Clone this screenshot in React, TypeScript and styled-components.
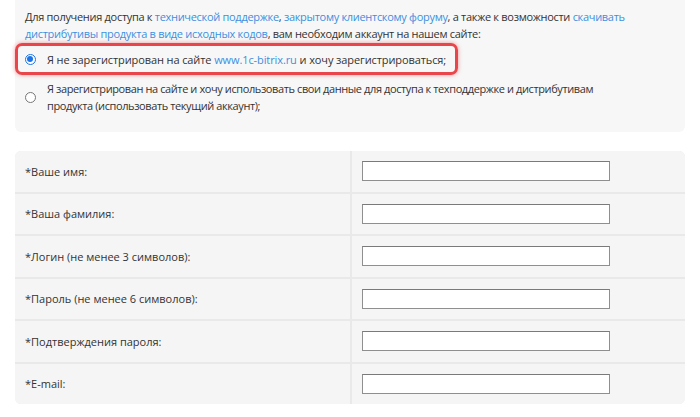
import React from 'react';
import styled, { createGlobalStyle } from 'styled-components';

const GlobalStyle = createGlobalStyle`
  html, body {
    margin: 0;
    padding: 0;
    background: #ffffff;
  }
  body {
    font-family: "Open Sans", "Noto Sans", Arial, sans-serif;
    color: #333333;
  }
`;

const Page = styled.div`
  padding: 0 15px;
  width: 670px;
`;

const InfoPanel = styled.div`
  background: #f7f7f7;
  border-radius: 0 0 6px 6px;
  padding: 8px 0 18px;
`;

const Intro = styled.p`
  margin: 0 0 1px;
  padding: 0 25px 0 10px;
  font-size: 11px;
  letter-spacing: -0.3px;
  line-height: 17px;
`;

const Link = styled.a`
  color: #3d8fe0;
  text-decoration: none;
`;

const Option = styled.label<{ $highlight?: boolean }>`
  display: flex;
  align-items: center;
  gap: 12px;
  box-sizing: border-box;
  font-size: 11px;
  line-height: 17px;
  ${({ $highlight }) =>
    $highlight
      ? `
    width: 443px;
    height: 32px;
    padding: 0 7px 0 7px;
    letter-spacing: -0.1px;
    white-space: nowrap;
    border: 3px solid #e8464b;
    border-radius: 7px;
    box-shadow: 0 0 4px rgba(232, 70, 75, 0.55);
    margin-bottom: 5px;
  `
      : `
    padding: 0 0 0 10px;
    letter-spacing: -0.4px;
  `}
`;

const OptionText = styled.span<{ $maxWidth?: number }>`
  max-width: ${({ $maxWidth }) => ($maxWidth ? `${$maxWidth}px` : 'none')};
`;

const Radio = styled.span<{ $checked?: boolean }>`
  flex: none;
  width: 11px;
  height: 11px;
  margin-left: -0.5px;
  margin-right: -0.5px;
  border-radius: 50%;
  box-sizing: border-box;
  border: 1px solid ${({ $checked }) => ($checked ? '#1a73e8' : '#767676')};
  background: #fff;
  position: relative;

  &::after {
    content: '';
    display: ${({ $checked }) => ($checked ? 'block' : 'none')};
    position: absolute;
    inset: 1.5px;
    border-radius: 50%;
    background: #1a73e8;
  }
`;

const FormTable = styled.div`
  margin-top: 19px;
  background: #e9e9e9;
  border-radius: 6px;
  overflow: hidden;
  display: grid;
  grid-template-columns: 335px 333px;
  grid-auto-rows: 40.5px;
  gap: 2px;
`;

const LabelCell = styled.div`
  background: #f5f5f5;
  display: flex;
  align-items: center;
  padding-left: 10px;
  font-size: 11px;
  color: #333;
`;

const FieldCell = styled.div`
  background: #f5f5f5;
  display: flex;
  align-items: center;
  padding-left: 10px;
`;

const TextInput = styled.input`
  width: 248px;
  height: 20px;
  box-sizing: border-box;
  border: 1px solid #8f8f8f;
  border-top-color: #7a7a7a;
  background: #fff;
  margin: 0;
  padding: 0 3px;
  font-size: 11px;
`;

const fields = [
  '*Ваше имя:',
  '*Ваша фамилия:',
  '*Логин (не менее 3 символов):',
  '*Пароль (не менее 6 символов):',
  '*Подтверждения пароля:',
  '*E-mail:',
];

export default function App() {
  return (
    <>
      <GlobalStyle />
      <Page>
        <InfoPanel>
          <Intro>
            Для получения доступа к <Link href="#">технической поддержке</Link>,{' '}
            <Link href="#">закрытому клиентскому форуму</Link>, а также к возможности{' '}
            <Link href="#">скачивать дистрибутивы продукта в виде исходных кодов</Link>, вам
            необходим аккаунт на нашем сайте:
          </Intro>
          <Option $highlight>
            <Radio $checked />
            <OptionText>
              Я не зарегистрирован на сайте <Link href="#">www.1c-bitrix.ru</Link> и хочу
              зарегистрироваться;
            </OptionText>
          </Option>
          <Option>
            <Radio />
            <OptionText $maxWidth={590}>
              Я зарегистрирован на сайте и хочу использовать свои данные для доступа к
              техподдержке и дистрибутивам продукта (использовать текущий аккаунт);
            </OptionText>
          </Option>
        </InfoPanel>
        <FormTable>
          {fields.map((f) => (
            <React.Fragment key={f}>
              <LabelCell>{f}</LabelCell>
              <FieldCell>
                <TextInput type={f.includes('Пароль') || f.includes('пароля') ? 'password' : 'text'} />
              </FieldCell>
            </React.Fragment>
          ))}
        </FormTable>
      </Page>
    </>
  );
}
